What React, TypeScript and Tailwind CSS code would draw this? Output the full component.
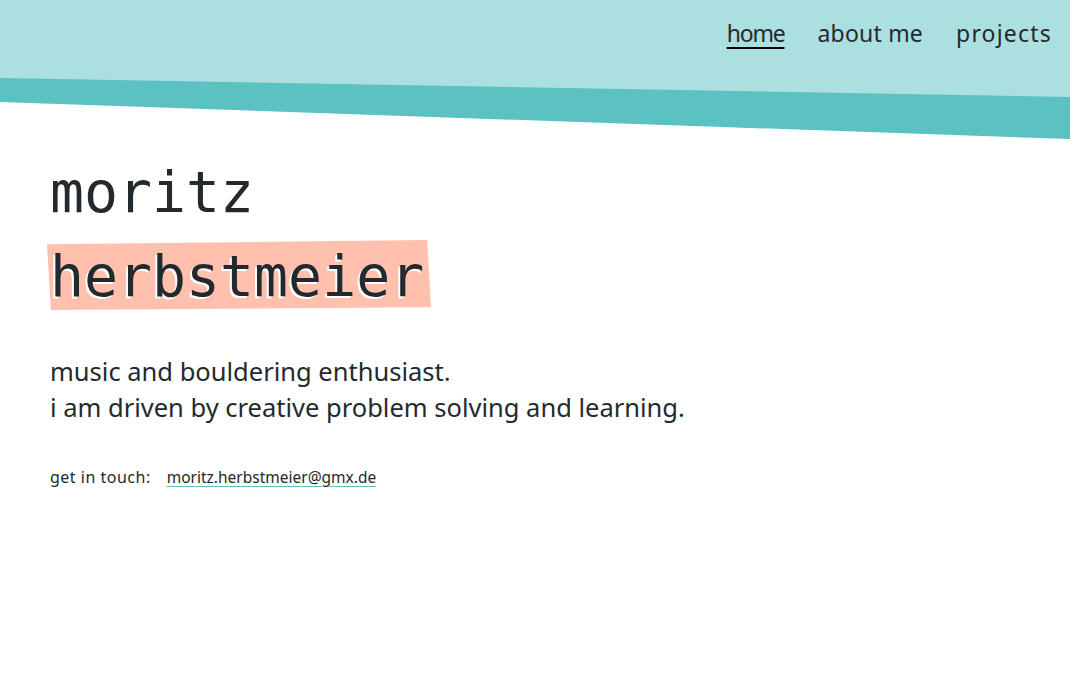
import React from "react";

export default function App() {
  return (
    <div className="min-h-[673px] w-full bg-white text-[#24292e]" style={{ fontFamily: "'Noto Sans', sans-serif" }}>
      <header className="relative h-[139px] w-full">
        <svg className="absolute inset-0 h-full w-full" viewBox="0 0 1070 139" preserveAspectRatio="none">
          <polygon points="0,0 1070,0 1070,139 0,102" fill="#5bc1c1" />
          <polygon points="0,0 1070,0 1070,97 0,78" fill="#acdfe0" />
        </svg>
        <nav className="relative flex justify-end gap-[33px] pr-[18px] pt-[16px] text-[23px] leading-[34px]">
          <a className="underline decoration-[2px] underline-offset-[5px] decoration-black tracking-[-1.2px]">home</a>
          <a className="tracking-[0.2px]">about me</a>
          <a className="tracking-[1.2px]">projects</a>
        </nav>
      </header>
      <main className="px-[50px] pt-[12px]">
        <h1 className="text-[56.5px] leading-[84px] font-normal" style={{ fontFamily: "'DejaVu Sans Mono', monospace" }}>
          <span className="block">moritz</span>
          <span className="relative inline-block">
            <span className="absolute left-[-3px] top-[5px] h-[70px] w-[384px] bg-[#ffc1ad] [clip-path:polygon(0_6%,99%_0,100%_96%,1%_100%)]" />
            <span className="relative [text-shadow:-2px_2px_0_#fff]">herbstmeier</span>
          </span>
        </h1>
        <div className="mt-[34px] text-[25.5px] leading-[36px]">
          <p>music and bouldering enthusiast.</p>
          <p>i am driven by creative problem solving and learning.</p>
        </div>
        <div className="mt-[40px] flex items-baseline gap-[16px] text-[16px]">
          <span className="tracking-[0.5px]">get in touch:</span>
          <a className="text-[15.5px] underline decoration-[#5bc1c1] underline-offset-[3px]">moritz.herbstmeier@gmx.de</a>
        </div>
      </main>
    </div>
  );
}
